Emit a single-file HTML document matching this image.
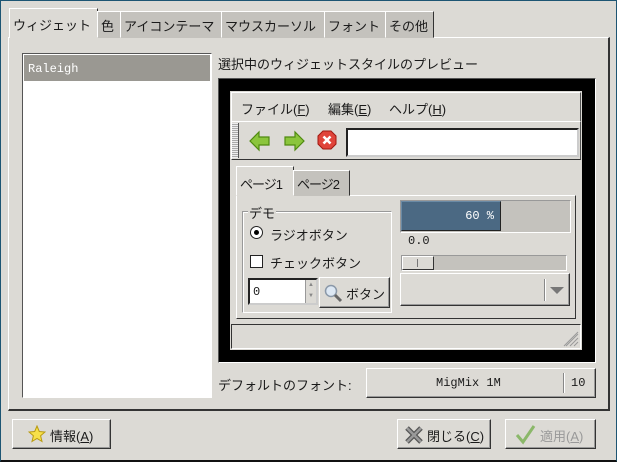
<!DOCTYPE html>
<html><head><meta charset="utf-8"><style>
*{margin:0;padding:0;box-sizing:border-box}
body{width:617px;height:462px;background:#dcdad5;position:relative;overflow:hidden;font-family:"Liberation Sans","Noto Sans CJK JP",sans-serif;font-size:13px;color:#1a1a1a}
.a{position:absolute}
.out{border:1px solid;border-color:#fff #555 #555 #fff}
.in{border:1px solid;border-color:#555 #fff #fff #555}
.tab{position:absolute;top:11px;height:27px;background:#c4c2bd;border:1px solid;border-color:#fff #333 transparent #fff;padding:4px 3px 0 3px;white-space:nowrap}
.mono{font-family:"Liberation Mono","Noto Sans CJK JP",monospace;font-size:12px}
.btn{position:absolute;background:#dcdad5;border:1px solid;border-color:#fff #333 #333 #fff;box-shadow:inset -1px -1px 0 #999}
</style></head><body>
<div class="a" style="left:0;top:0;width:617px;height:462px;border:1px solid #1d5573;border-bottom:2px solid #111"></div>
<div class="a out" style="left:8px;top:37px;width:602px;height:374px;border-right:2px solid #333;border-bottom:2px solid #333"></div>
<div class="tab" style="left:9px;top:8px;height:30px;background:#dcdad5;border-bottom:none;padding-top:6px;width:89px">ウィジェット</div>
<div class="tab" style="left:97px;width:24px">色</div>
<div class="tab" style="left:120px;width:102px">アイコンテーマ</div>
<div class="tab" style="left:221px;width:104px">マウスカーソル</div>
<div class="tab" style="left:324px;width:62px">フォント</div>
<div class="tab" style="left:385px;width:49px">その他</div>
<div class="a in" style="left:22px;top:53px;width:190px;height:345px;background:#fff"></div>
<div class="a mono" style="left:24px;top:55px;width:186px;height:26px;background:#9a9892;color:#fff;padding:7px 4px">Raleigh</div>
<div class="a" style="left:218px;top:54px">選択中のウィジェットスタイルのプレビュー</div>
<div class="a in" style="left:218px;top:78px;width:378px;height:285px;background:#000"></div>
<div class="a" style="left:230px;top:91px;width:352px;height:259px;background:#dcdad5"></div>
<div class="a out" style="left:231px;top:92px;width:350px;height:30px;border-bottom-color:#333"></div>
<div class="a" style="left:241px;top:99px">ファイル(<u>F</u>)</div>
<div class="a" style="left:328px;top:99px">編集(<u>E</u>)</div>
<div class="a" style="left:389px;top:99px">ヘルプ(<u>H</u>)</div>
<div class="a out" style="left:231px;top:121px;width:350px;height:39px;border-bottom-color:#333"></div>
<div class="a" style="left:232px;top:123px;width:7px;height:35px;background:repeating-linear-gradient(0deg,#eee 0 1px,#aaa 1px 2px);border-right:1px solid #555"></div>
<svg class="a" style="left:248px;top:130px" width="24" height="22" viewBox="0 0 24 22"><path d="M2 11 L11 2 V7 H21 V15 H11 V20 Z" fill="#8bc53c" stroke="#4f8a10" stroke-width="1.2"/></svg>
<svg class="a" style="left:282px;top:130px" width="24" height="22" viewBox="0 0 24 22"><path d="M22 11 L13 2 V7 H3 V15 H13 V20 Z" fill="#8bc53c" stroke="#4f8a10" stroke-width="1.2"/></svg>
<svg class="a" style="left:317px;top:130px" width="20" height="20" viewBox="0 0 20 20"><path d="M6 1H14L19 6V14L14 19H6L1 14V6Z" fill="#e0443a" stroke="#a01810"/><path d="M6.5 6.5L13.5 13.5M13.5 6.5L6.5 13.5" stroke="#fff" stroke-width="2.6"/></svg>
<div class="a" style="left:346px;top:128px;width:233px;height:29px;background:#fff;border:2px solid #222;border-right-color:#ccc;border-bottom-color:#ccc"></div>
<div class="a out" style="left:236px;top:195px;width:340px;height:124px;border-right-color:#333;border-bottom-color:#333"></div>
<div class="a" style="left:236px;top:166px;width:58px;height:30px;background:#dcdad5;border:1px solid;border-color:#fff #333 transparent #fff;padding:7px 3px;white-space:nowrap;letter-spacing:-1px">ページ1</div>
<div class="a" style="left:293px;top:170px;width:57px;height:26px;background:#c4c2bd;border:1px solid;border-color:#fff #333 transparent #fff;padding:3px 3px;white-space:nowrap;letter-spacing:-1px">ページ2</div>
<div class="a" style="left:242px;top:211px;width:150px;height:102px;border:1px solid;border-color:#999 #fff #fff #999;box-shadow:inset 1px 1px 0 #fff"></div>
<div class="a" style="left:248px;top:203px;background:#dcdad5;padding:0 1px">デモ</div>
<div class="a" style="left:250px;top:226px;width:13px;height:13px;border:1px solid #222;border-radius:50%;background:#fff"></div>
<div class="a" style="left:254px;top:230px;width:5px;height:5px;border-radius:50%;background:#000"></div>
<div class="a" style="left:270px;top:225px">ラジオボタン</div>
<div class="a" style="left:250px;top:255px;width:13px;height:13px;border:1px solid #222;background:#fff"></div>
<div class="a" style="left:270px;top:253px">チェックボタン</div>
<div class="a mono" style="left:248px;top:278px;width:70px;height:27px;background:#fff;border:2px solid #222;border-right-color:#ccc;border-bottom-color:#ccc;padding:5px 3px">0</div>
<div class="a" style="left:305px;top:280px;width:11px;height:23px;background:#dcdad5;border-left:1px solid #999;font-size:6px;color:#888;text-align:center;line-height:11px">▲<br>▼</div>
<div class="btn" style="left:319px;top:277px;width:71px;height:31px"></div>
<svg class="a" style="left:323px;top:283px" width="20" height="20"><circle cx="8" cy="8" r="5.5" fill="#dde8f4" stroke="#8a98a8" stroke-width="1.5"/><path d="M12 12L18 18" stroke="#666" stroke-width="3"/></svg>
<div class="a" style="left:346px;top:284px">ボタン</div>
<div class="a" style="left:400px;top:200px;width:171px;height:33px;background:#c4c2bd;border:1px solid;border-color:#999 #fff #fff #999"></div>
<div class="a mono" style="left:401px;top:201px;width:100px;height:30px;background:#4b6983;border:1px solid;border-color:#6a8aa5 #222 #222 #6a8aa5;color:#fff;text-align:right;padding:7px 6px">60 %</div>
<div class="a mono" style="left:408px;top:234px">0.0</div>
<div class="a" style="left:401px;top:255px;width:166px;height:16px;background:#c4c2bd;border:1px solid;border-color:#999 #fff #fff #999"></div>
<div class="a" style="left:402px;top:256px;width:32px;height:14px;background:#dcdad5;border:1px solid;border-color:#fff #333 #333 #fff"></div>
<div class="a" style="left:417px;top:259px;width:1px;height:8px;background:#777"></div>
<div class="btn" style="left:400px;top:273px;width:170px;height:33px"></div>
<div class="a" style="left:544px;top:279px;width:1px;height:22px;background:#888;box-shadow:1px 0 0 #fff"></div>
<svg class="a" style="left:549px;top:286px" width="16" height="9"><path d="M1 1H15L8 8Z" fill="#777"/></svg>
<div class="a" style="left:231px;top:324px;width:350px;height:25px;border:1px solid;border-color:#333 #fff #fff #333"></div>
<svg class="a" style="left:563px;top:331px" width="16" height="16"><path d="M15 3L3 15M15 7L7 15M15 11L11 15M15 1L1 15" stroke="#999" stroke-width="1"/></svg>
<div class="a" style="left:218px;top:375px">デフォルトのフォント:</div>
<div class="btn" style="left:366px;top:368px;width:230px;height:30px"></div>
<div class="a mono" style="left:436px;top:376px">MigMix 1M</div>
<div class="a" style="left:563px;top:373px;width:1px;height:20px;background:#888;box-shadow:1px 0 0 #fff"></div>
<div class="a mono" style="left:571px;top:376px">10</div>
<div class="btn" style="left:12px;top:419px;width:99px;height:30px"></div>
<svg class="a" style="left:28px;top:425px" width="18" height="18" viewBox="0 0 18 18"><path d="M9 1L11.3 6.5L17 7L12.6 10.8L14 16.5L9 13.5L4 16.5L5.4 10.8L1 7L6.7 6.5Z" fill="#f7e04a" stroke="#b89a10"/></svg>
<div class="a" style="left:50px;top:426px">情報(<u>A</u>)</div>
<div class="btn" style="left:397px;top:419px;width:94px;height:30px"></div>
<svg class="a" style="left:403px;top:424px" width="22" height="22" viewBox="0 0 22 22"><path d="M4 4L18 18M18 4L4 18" stroke="#555" stroke-width="5"/><path d="M4 4L18 18M18 4L4 18" stroke="#999" stroke-width="2.5"/></svg>
<div class="a" style="left:427px;top:426px">閉じる(<u>C</u>)</div>
<div class="btn" style="left:505px;top:419px;width:91px;height:30px"></div>
<svg class="a" style="left:514px;top:423px" width="22" height="22"><path d="M3 12L9 19L20 3" stroke="#8bb86a" stroke-width="3" fill="none"/></svg>
<div class="a" style="left:540px;top:426px;color:#999">適用(<u>A</u>)</div>
</body></html>
